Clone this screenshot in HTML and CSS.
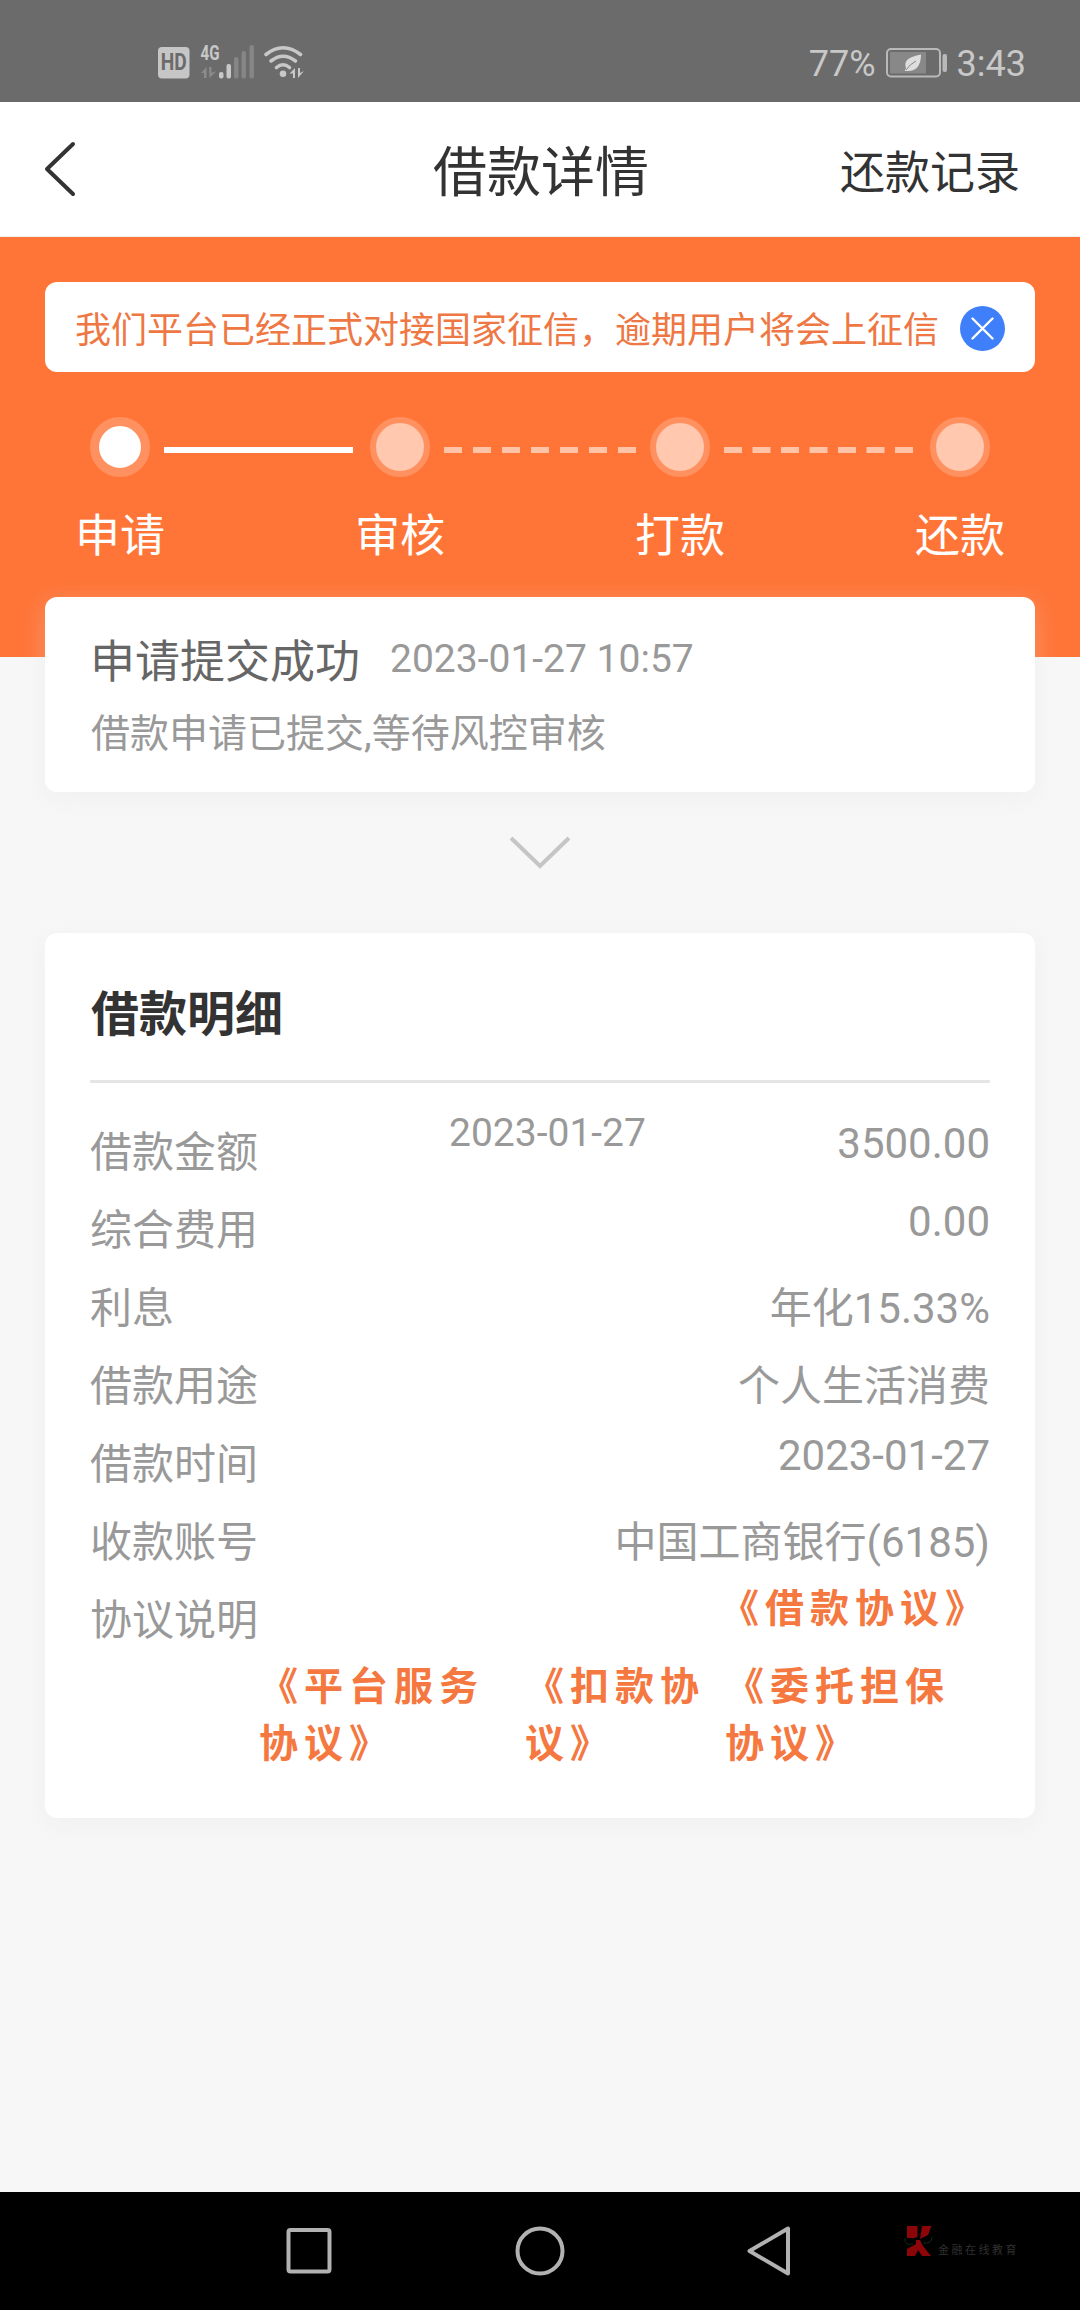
FILE: index.html
```html
<!DOCTYPE html>
<html lang="zh-CN">
<head>
<meta charset="utf-8">
<title>借款详情</title>
<link rel="stylesheet" href="styles.css">
</head>
<body>
<div class="status">
  <svg class="status-icons" width="150" height="40" viewBox="0 0 150 40">
    <rect x="3" y="5" width="31.500" height="31.500" rx="4" fill="#c6c6c6"/>
    <text x="18.700" y="28" class="hd" textLength="26" lengthAdjust="spacingAndGlyphs">HD</text>
    <text x="55" y="18" class="net" textLength="19" lengthAdjust="spacingAndGlyphs">4G</text>
    <path d="M46 31L51.500 25V36H49V31ZM54 25H56.500V31L61.500 29L54.500 36Z" fill="#8b8b8b"/>
    <g fill="#c8c8c8"><rect x="64" y="30" width="4.500" height="6.500" rx="2"/><rect x="71.500" y="22" width="4.500" height="14.500" rx="2"/></g>
    <g fill="#868686"><rect x="79" y="15" width="4.500" height="21.500" rx="2"/><rect x="86.500" y="9" width="4.500" height="27.500" rx="2"/><rect x="94.500" y="3" width="4.500" height="33.500" rx="2"/></g>
    <g fill="none" stroke="#c8c8c8" stroke-width="3.600" stroke-linecap="round"><path d="M111 12.500Q128-1 145.500 12.500"/><path d="M116 19Q128 9.500 140.500 19"/><path d="M121.500 25.500Q128 20 134.500 25.500"/></g>
    <circle cx="128" cy="31.800" r="3.300" fill="#c8c8c8"/>
    <path d="M134.500 31.500L140 26V36H138V31.500ZM143 26H145V31L149 29L143 36Z" fill="#c8c8c8"/>
  </svg>
  <div class="status-right">
    <span>77%</span>
    <svg class="battery" width="62" height="30" viewBox="0 0 62 30">
      <rect x="1" y="1" width="53" height="27.500" rx="4" fill="none" stroke="#b9b9b9" stroke-width="2"/>
      <rect x="4" y="4" width="36" height="21.500" fill="#888"/>
      <path d="M35 6.500C22 9 17.500 13 20 20L18.800 23H21C30 23.500 35 18 35 6.500Z" fill="#dedede"/>
      <path d="M20 22Q24 16 30 13" fill="none" stroke="#888" stroke-width="1"/>
      <rect x="56.500" y="6" width="4.500" height="18" rx="2" fill="#b9b9b9"/>
    </svg>
    <span>3:43</span>
  </div>
</div>
<header class="header">
  <svg class="back" width="32" height="56" viewBox="0 0 32 56"><path d="M29 3L3 28L29 53" fill="none" stroke="#333" stroke-width="4" stroke-linecap="round" stroke-linejoin="round"/></svg>
  <h1 class="title">借款详情</h1>
  <a class="records">还款记录</a>
</header>
<main class="main">
  <section class="hero">
    <div class="notice">
      <span class="notice-text">我们平台已经正式对接国家征信，逾期用户将会上征信</span>
      <svg width="45" height="45" viewBox="0 0 45 45"><circle cx="22.500" cy="22.500" r="22.500" fill="#3f7ffa"/><path d="M12.500 12.500L32.500 32.500M32.500 12.500L12.500 32.500" stroke="#fff" stroke-width="2.400" stroke-linecap="round"/></svg>
    </div>
    <div class="steps">
      <div class="step"><i class="dot dot-on"></i><span>申请</span></div>
      <svg class="bar" viewBox="0 0 192 6"><path d="M0 3H189" stroke="#fff" stroke-width="6"/></svg>
      <div class="step"><i class="dot"></i><span>审核</span></div>
      <svg class="bar" viewBox="0 0 192 6"><path d="M0 3H192" stroke="#ffc4a8" stroke-width="6" stroke-dasharray="18 11"/></svg>
      <div class="step"><i class="dot"></i><span>打款</span></div>
      <svg class="bar" viewBox="0 0 192 6"><path d="M0 3H189" stroke="#ffc4a8" stroke-width="6" stroke-dasharray="18 10.500"/></svg>
      <div class="step"><i class="dot"></i><span>还款</span></div>
    </div>
  </section>
  <section class="card progress">
    <div class="progress-head"><span class="progress-title">申请提交成功</span><time class="progress-time">2023-01-27 10:57</time></div>
    <p class="progress-desc">借款申请已提交,等待风控审核</p>
  </section>
  <svg class="expand" width="64" height="35" viewBox="0 0 64 35"><path d="M3 3L32 31L61 3" fill="none" stroke="#c5c5c5" stroke-width="4"/></svg>
  <section class="card detail">
    <h2 class="detail-title">借款明细</h2>
    <div class="row"><span>借款金额</span><span class="mid">2023-01-27</span><span class="value num">3500.00</span></div>
    <div class="row"><span>综合费用</span><span class="value num">0.00</span></div>
    <div class="row"><span>利息</span><span class="value">年化15.33%</span></div>
    <div class="row"><span>借款用途</span><span class="value">个人生活消费</span></div>
    <div class="row"><span>借款时间</span><span class="value num">2023-01-27</span></div>
    <div class="row"><span>收款账号</span><span class="value">中国工商银行(6185)</span></div>
    <div class="row"><span>协议说明</span><a class="value link">《借款协议》</a></div>
    <div class="links"><a class="link">《平台服务协议》</a><a class="link">《扣款协议》</a><a class="link">《委托担保协议》</a></div>
  </section>
</main>
<nav class="nav">
  <svg class="nav-icon" width="50" height="54" viewBox="0 0 50 54"><rect x="4.500" y="6" width="41" height="41.500" rx="2" fill="none" stroke="#b2b2b2" stroke-width="4"/></svg>
  <svg class="nav-icon" width="54" height="54" viewBox="0 0 54 54"><circle cx="27" cy="27" r="22.500" fill="none" stroke="#b2b2b2" stroke-width="4"/></svg>
  <svg class="nav-icon nav-back" width="50" height="54" viewBox="0 0 50 54"><path d="M44 4.500V49.500L5.500 27Z" fill="none" stroke="#b2b2b2" stroke-width="4" stroke-linejoin="round"/></svg>
  <div class="brand">
    <svg width="30" height="34" viewBox="0 0 30 34"><path d="M3 2H13.500V13L10 14H3ZM18 2H27.500L24 11L16 15ZM3 25L12 20V16H16L19 22L27 32H18L14 26L11 32H3Z" fill="#8c0509"/><path d="M1 14Q0 22 9 20M19 19Q28 20 28 13" fill="none" stroke="#14281c" stroke-width="1"/></svg>
    <span>金融在线教育</span>
  </div>
</nav>
</body>
</html>
```

FILE: styles.css
```css
* { box-sizing: border-box; }
body {
  margin: 0;
  width: 1080px;
  height: 2310px;
  display: flex;
  flex-direction: column;
  background: #f7f7f7;
  font-family: Roboto, "Noto Sans CJK SC", sans-serif;
  color: #999;
}
svg { display: block; flex: none; }
h1, h2, p { margin: 0; font-weight: 400; }

.status {
  height: 102px;
  flex: none;
  display: flex;
  justify-content: space-between;
  padding: 42px 54px 0 155px;
  background: #6b6b6b;
  color: #c8c8c8;
  font-size: 36px;
  line-height: 45px;
}
.status-right { display: flex; }
.battery { margin: 6px 9px 0 10px; }
.hd { font: 700 23px Roboto, sans-serif; fill: #6b6b6b; text-anchor: middle; }
.net { font: 700 21px Roboto, sans-serif; fill: #c8c8c8; text-anchor: middle; }

.header {
  height: 135px;
  flex: none;
  display: grid;
  grid-template-columns: 1fr 216px 1fr;
  align-items: center;
  padding: 6px 60px 0 44px;
  background: #fff;
  border-bottom: 1px solid #eee;
  color: #333;
}
.back { margin-top: -6px; }
.title { width: 216px; padding-top: 4px; font-size: 54px; line-height: 80px; white-space: nowrap; margin-left: 9px; }
.records { justify-self: end; padding-top: 3px; font-size: 45px; line-height: 80px; }

.main { flex: 1; display: flex; flex-direction: column; }
.hero { height: 420px; flex: none; padding: 45px; background: #ff7538; }
.notice {
  height: 90px;
  display: flex;
  align-items: center;
  justify-content: space-between;
  padding: 2px 30px 0;
  border-radius: 12px;
  background: #fff;
  color: #ee7743;
  font-size: 36px;
}
.notice-text { padding-bottom: 3px; }
.steps { display: flex; justify-content: space-between; padding: 45px 45px 0; }
.step {
  width: 60px;
  display: flex;
  flex-direction: column;
  align-items: center;
  color: #fff;
  font-size: 45px;
  line-height: 60px;
}
.step span { margin-top: 30px; white-space: nowrap; }
.dot { width: 60px; height: 60px; border: 6px solid #ff9161; border-radius: 50%; background: #ffc8af; }
.dot-on { border-width: 9px; background: #fff; }
.bar { width: 192px; height: 6px; margin-top: 30px; }

.card { width: 990px; margin: 0 auto; padding: 0 45px; border-radius: 12px; background: #fff; box-shadow: 0 6px 24px rgba(225, 225, 225, 0.3); flex: none; }
.progress { position: relative; height: 195px; margin-top: -60px; padding-top: 36px; }
.progress-head { display: flex; line-height: 60px; }
.progress-title { color: #666; font-size: 45px; }
.progress-time { margin-left: 30px; font-size: 39px; line-height: 53px; }
.progress-desc { margin-top: 11px; padding-left: 1px; font-size: 39px; line-height: 60px; }
.expand { margin: 43px auto 0; }

.detail { height: 885px; margin-top: 63px; }
.detail-title { height: 150px; margin-bottom: 31px; padding-left: 1px; border-bottom: 3px solid #e5e5e5; color: #333; font-size: 48px; font-weight: 700; line-height: 164px; }
.row { height: 78px; display: flex; font-size: 42px; line-height: 78px; }
.value { margin-left: auto; }
.num { line-height: 59px; }
.mid { margin-left: 191px; font-size: 39px; line-height: 38px; }
.link { color: #f47840; font-size: 39px; font-weight: 700; letter-spacing: 6px; line-height: 57px; }
.row .link { line-height: 55px; }
.links { display: grid; grid-template-columns: 266px 200px 265px; justify-content: end; margin-top: -1px; }

.nav { height: 118px; flex: none; display: flex; padding: 32px 0 0 284px; background: #000; }
.nav-icon + .nav-icon { margin-left: 179px; }
.nav-icon + .nav-back { margin-left: 177px; }
.brand { display: flex; margin-left: 110px; color: #303030; font-size: 11px; letter-spacing: 2.500px; line-height: 53px; white-space: nowrap; }
.brand span { margin-left: 4px; }
```
